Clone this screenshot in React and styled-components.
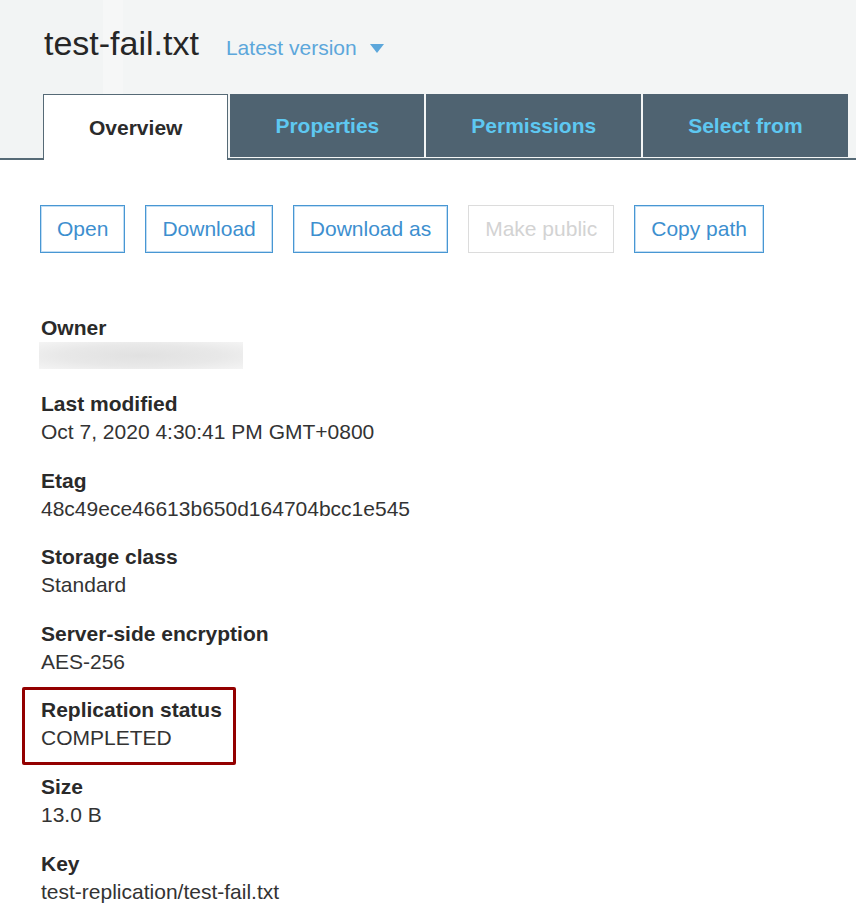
import React from 'react';
import styled, { createGlobalStyle } from 'styled-components';

const GlobalStyle = createGlobalStyle`
  body {
    margin: 0;
    background: #fff;
    font-family: "Liberation Sans", Arial, sans-serif;
    color: #333;
  }
`;

const Page = styled.div`
  width: 856px;
  min-height: 910px;
  background: #fff;
  overflow: hidden;
`;

const Header = styled.header`
  padding-top: 23px;
  background: linear-gradient(to right, #f2f4f4 0 103px, #f6f7f7 103px 123px, #f3f5f5 123px);
`;

const TitleRow = styled.div`
  display: flex;
  align-items: baseline;
  gap: 27px;
  height: 40px;
  padding-left: 44px;
  margin-bottom: 31px;
`;

const Title = styled.h1`
  margin: 0;
  font-size: 34px;
  line-height: 40px;
  font-weight: normal;
  color: #262626;
`;

const VersionPicker = styled.button`
  display: flex;
  align-items: center;
  gap: 13px;
  padding: 0;
  border: none;
  background: none;
  font-family: inherit;
  font-size: 21px;
  color: #5ca7db;
  cursor: pointer;
`;

const TabBar = styled.nav`
  display: flex;
  align-items: flex-start;
  gap: 2px;
  padding-left: 43px;
  border-bottom: 2px solid #566a76;
  height: 64px;
`;

const Tab = styled.div`
  box-sizing: border-box;
  display: flex;
  align-items: center;
  justify-content: center;
  padding: 0 45px;
  font-size: 21px;
  font-weight: bold;
  cursor: pointer;
  height: ${(p) => (p.$active ? '66px' : '63px')};
  background: ${(p) => (p.$active ? '#fff' : '#4f6371')};
  color: ${(p) => (p.$active ? '#2b2b2b' : '#5ec8f1')};
  border: ${(p) => (p.$active ? '1px solid #566a76' : 'none')};
  border-bottom: none;
  position: relative;
  z-index: 1;
`;

const Content = styled.main`
  padding: 45px 40px 0;
`;

const Toolbar = styled.div`
  display: flex;
  gap: 20px;
`;

const ActionButton = styled.button`
  box-sizing: border-box;
  height: 48px;
  padding: 0 16px;
  font-family: inherit;
  font-size: 21px;
  background: #fff;
  color: ${(p) => (p.disabled ? '#d3d3d3' : '#3d8fcf')};
  border: 1px solid ${(p) => (p.disabled ? '#dcdcdc' : '#4897d3')};
  box-shadow: ${(p) => (p.disabled ? 'none' : 'inset 0 0 0 1px rgba(120, 180, 228, 0.45)')};
  cursor: ${(p) => (p.disabled ? 'default' : 'pointer')};
`;

const Fields = styled.dl`
  margin: 60.5px 0 0 1px;
`;

const Field = styled.div`
  position: relative;
  margin-bottom: 19.6px;

  ${(p) =>
    p.$highlight &&
    `
    &::after {
      content: '';
      position: absolute;
      top: -9.5px;
      left: -19px;
      width: 214px;
      height: 78px;
      box-sizing: border-box;
      border: 3px solid #930000;
      border-radius: 2px;
    }
  `}
`;

const Label = styled.dt`
  font-size: 21px;
  line-height: 27px;
  font-weight: bold;
  color: #2a2a2a;
`;

const Value = styled.dd`
  margin: 0;
  font-size: 21px;
  line-height: 30px;
  color: #333;
  height: 30px;
  display: flex;
  align-items: center;
`;

const Redacted = styled.div`
  width: 204px;
  height: 27px;
  margin-left: -2px;
  background: radial-gradient(ellipse at center, #e1e1e1 0%, #e8e8e8 55%, #f4f4f4 100%);
`;

const Caret = () => (
  <svg width="14" height="9" viewBox="0 0 14 9">
    <path d="M0 0 L14 0 L7 9 Z" fill="#5ca7db" />
  </svg>
);

const tabs = ['Overview', 'Properties', 'Permissions', 'Select from'];
const actions = [
  { label: 'Open' },
  { label: 'Download' },
  { label: 'Download as' },
  { label: 'Make public', disabled: true },
  { label: 'Copy path' },
];

const details = [
  { label: 'Owner', redacted: true },
  { label: 'Last modified', value: 'Oct 7, 2020 4:30:41 PM GMT+0800' },
  { label: 'Etag', value: '48c49ece46613b650d164704bcc1e545' },
  { label: 'Storage class', value: 'Standard' },
  { label: 'Server-side encryption', value: 'AES-256' },
  { label: 'Replication status', value: 'COMPLETED', highlight: true },
  { label: 'Size', value: '13.0 B' },
  { label: 'Key', value: 'test-replication/test-fail.txt' },
];

export default function App() {
  return (
    <Page>
      <GlobalStyle />
      <Header>
        <TitleRow>
          <Title>test-fail.txt</Title>
          <VersionPicker>
            Latest version
            <Caret />
          </VersionPicker>
        </TitleRow>
        <TabBar>
          {tabs.map((t, i) => (
            <Tab key={t} $active={i === 0}>
              {t}
            </Tab>
          ))}
        </TabBar>
      </Header>

      <Content>
        <Toolbar>
          {actions.map((a) => (
            <ActionButton key={a.label} disabled={a.disabled}>
              {a.label}
            </ActionButton>
          ))}
        </Toolbar>

        <Fields>
          {details.map((d) => (
            <Field key={d.label} $highlight={d.highlight}>
              <Label>{d.label}</Label>
              <Value>{d.redacted ? <Redacted /> : d.value}</Value>
            </Field>
          ))}
        </Fields>
      </Content>
    </Page>
  );
}
